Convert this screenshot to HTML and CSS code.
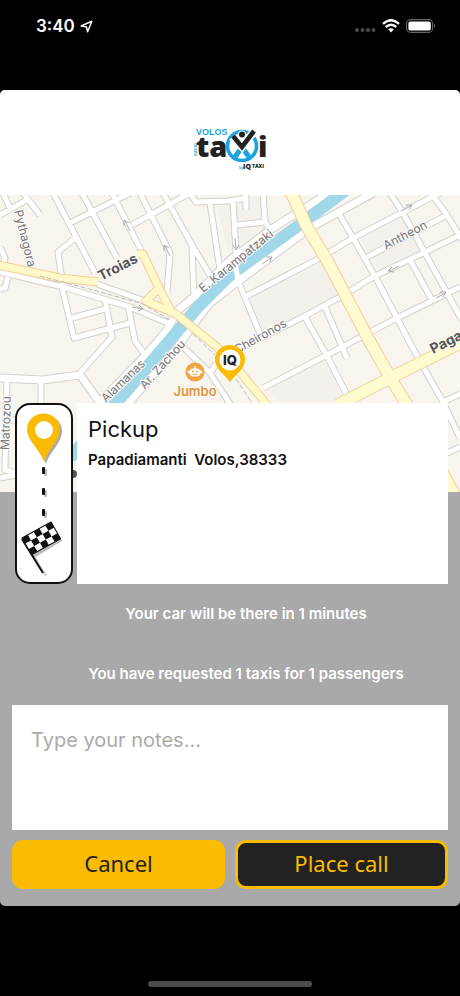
FILE: index.html
```html
<!DOCTYPE html>
<html lang="en">
<head>
    <meta charset="UTF-8">
    <meta name="viewport" content="width=device-width, initial-scale=1.0">
    <title>Volos Taxi</title>
    <link rel="stylesheet" href="styles.css">
</head>
<body>

<div class="status-bar">
    <div class="status-time">
        <span>3:40</span>
        <svg width="13" height="13" viewBox="0 0 13 13">
            <path d="M1.2 6 L11.8 1.2 L7.6 11.8 L6.4 6.8 Z" fill="none" stroke="#fff" stroke-width="1.5" stroke-linejoin="round"/>
        </svg>
    </div>
    <div class="status-icons">
        <svg width="22" height="16" viewBox="0 0 22 16" fill="#4a4a4a">
            <circle cx="3" cy="12" r="2"/>
            <circle cx="8.5" cy="12" r="2"/>
            <circle cx="14" cy="12" r="2"/>
            <circle cx="19.5" cy="12" r="2"/>
        </svg>
        <svg width="18" height="14" viewBox="0 0 18 14">
            <path d="M1 4.8 Q9 -2.4 17 4.8" fill="none" stroke="#fff" stroke-width="2.4"/>
            <path d="M3.8 8 Q9 3.4 14.2 8" fill="none" stroke="#fff" stroke-width="2.4"/>
            <path d="M6.2 10.3 Q9 8 11.8 10.3 L9 13.4 Z" fill="#fff"/>
        </svg>
        <svg width="30" height="14" viewBox="0 0 30 14">
            <rect x="0.6" y="0.6" width="26" height="12.8" rx="4" fill="none" stroke="#666" stroke-width="1.1"/>
            <rect x="2.4" y="2.4" width="22.4" height="9.2" rx="2.2" fill="#fff"/>
            <path d="M28 4.8 Q30.4 7 28 9.2 Z" fill="#666"/>
        </svg>
    </div>
</div>

<main class="app">
    <header class="app-header">
        <svg class="logo" width="76" height="50" viewBox="193 123 76 50">
            <text x="197" y="135" class="logo-blue" font-size="9">VOLOS</text>
            <text x="198" y="156" class="logo-blue" font-size="4" transform="rotate(-90 198 156)">RADIO</text>
            <text x="197" y="157" class="logo-black" font-size="29">ta</text>
            <text x="259" y="157" class="logo-black" font-size="29">i</text>
            <circle cx="243" cy="146" r="14.5" fill="none" stroke="#1ba4e0" stroke-width="3.6"/>
            <path d="M236 157 L243 147 L250 157" fill="none" stroke="#1ba4e0" stroke-width="5"/>
            <path d="M233 137 L243 147 L256 130" fill="none" stroke="#fff" stroke-width="8"/>
            <path d="M234 136 L243 147 L255 131" fill="none" stroke="#222" stroke-width="4.6"/>
            <circle cx="243" cy="134.5" r="4" fill="#fff"/>
            <circle cx="243" cy="134.5" r="3" fill="#222"/>
            <text x="240" y="169" class="logo-blue" font-size="4">by</text>
            <text x="244" y="169" class="logo-black" font-size="7">IQ</text>
            <text x="253" y="168" class="logo-black" font-size="5">TAXI</text>
        </svg>
    </header>

    <svg class="map" viewBox="0 195 460 297" preserveAspectRatio="xMidYMin slice">
        <defs>
            <path id="streets" d="
                M53 193 L95 273 M82 193 L117 258 M112 193 L142 252 M140 193 L170 253 L167 293
                M163 193 L193 247 L213 280 M192 247 L194 297 M70 223 L130 193 M132 225 L190 193
                M190 193 L196 202 L230 201 L246 198 M210 203 L220 270 M23 193 L40 215 M0 215 L30 198 M3 193 L10 208
                M75 238 L58 252 L63 287 M0 247 L5 258 L3 266 M0 272 L63 287 L130 307 L170 324 M97 284 L145 301
                M62 287 L74 338 L130 323 M72 318 L105 309 M105 299 L112 337 L80 373 M128 305 L135 341 L146 356
                M8 277 L5 288 L0 289
                M233 201 L236 252 L239 283 L260 334 M246 193 L246 210 M263 193 L265 222 L270 230 M236 225 L265 222
                M243 298 L320 258 L353 238 L403 212 L440 193 M367 257 L447 215
                M235 351 L303 317 L340 297 L373 277 L423 253 L460 235
                M263 388 L327 355 L397 318 L460 287
                M338 212 L353 238 L377 280 L397 318 L411 345 L443 402 L460 438
                M390 193 L403 213 L425 253 L447 293 L462 320 M431 193 L447 215 L462 240 M410 260 L432 300
                M305 317 L327 356 L350 401 M325 307 L347 358
                M443 402 L460 394 M445 454 L460 447
                M41 380 L41 410 M7 380 L5 470 L15 473 M0 478 L20 474 M7 420 L15 420
                M182 346 L210 373 L232 407 M210 373 L216 364"/>
            <path id="avenues" d="
                M329 193 L273 228 L230 260 L194 297 L177 311 L167 330 L147 354 L102 400
                M373 193 L310 228 L236 283 L209 304 L190 329 L178 347 L127 405
                M0 378 L43 380 L80 375 L107 412"/>
            <path id="mainRoads" d="
                M-2 265 L60 278 L98 282 M138 254 L143 254 L157 284 L172 313 M159 288 L146 301 L176 314 L217 347 L240 372 L268 406"/>
            <path id="wideRoads" d="M290 190 L307 227 L328 262 L370 342 L390 377 L407 405 L448 483 L456 498 M338 405 L390 378 L462 342"/>
        </defs>

        <rect y="195" width="460" height="297" fill="#f8f5ef"/>
        <path d="M245 300 L322 262 L345 297 L262 333 Z M265 387 L323 358 L346 402 L280 402 Z M357 233 L402 214 L420 250 L380 272 Z M215 200 L230 258 L268 230 L262 197 Z" fill="#f4f1ec"/>

        <use href="#streets" class="street-edge"/>
        <use href="#avenues" class="avenue-edge"/>
        <use href="#streets" class="street"/>
        <use href="#avenues" class="avenue"/>
        <path class="river" d="M354 184 L302 223 L230 275 L198 307 L170 340 L116 403 L70 458"/>
        <path d="M235 262 L239 286" class="street"/>
        <use href="#mainRoads" class="main-edge"/>
        <use href="#wideRoads" class="wide-edge"/>
        <use href="#mainRoads" class="main-road"/>
        <use href="#wideRoads" class="wide-road"/>

        <!-- railway and one-way arrows -->
        <path d="M40 276 L97 291 L143 304 L170 320 M193 334 L215 355 M236 379 L252 403" class="railway"/>
        <g class="arrows">
            <path d="M130 231 L125 221 M124 226 L124 220 L129 223"/>
            <path d="M170 256 L165 246 M164 251 L164 245 L169 248"/>
            <path d="M132 307 L142 309 M139 305 L143 309 L138 311"/>
            <path d="M235 238 L236 249 M233 245 L236 250 L239 245"/>
            <path d="M262 264 L271 258 M266 257 L272 257 L270 262"/>
            <path d="M401 211 L411 206 M406 205 L412 205 L409 210"/>
            <path d="M399 266 L389 271 M392 267 L388 271 L394 272"/>
            <path d="M436 298 L445 293 M440 292 L446 292 L443 297"/>
        </g>

        <g class="map-labels">
            <text x="14" y="211" transform="rotate(76 14 211)">Pythagora</text>
            <text x="203" y="293" transform="rotate(-39 203 293)">E. Karampatzaki</text>
            <text x="386" y="250" transform="rotate(-28 386 250)">Antheon</text>
            <text x="237" y="354" transform="rotate(-29 237 354)">Cheironos</text>
            <text x="106" y="403" transform="rotate(-44 106 403)">Alamanas</text>
            <text x="145" y="390" transform="rotate(-48 145 390)">Ar. Zachou</text>
            <text x="9" y="450" transform="rotate(-88 9 450)">Matrozou</text>
            <text x="101" y="281" class="label-bold" transform="rotate(-27 101 281)">Troias</text>
            <text x="433" y="354" class="label-bold" transform="rotate(-27 433 354)">Pagas</text>
        </g>

        <circle cx="73" cy="474" r="4" fill="#555"/>

        <!-- toy shop -->
        <circle cx="195" cy="372" r="9.5" fill="#f0a33e"/>
        <rect x="189.5" y="368.5" width="11" height="8" rx="4" fill="#fff"/>
        <circle cx="189" cy="372" r="1.4" fill="#fff"/>
        <circle cx="201" cy="372" r="1.4" fill="#fff"/>
        <path d="M195 369 V366" stroke="#fff" stroke-width="1.5"/>
        <circle cx="193" cy="371.5" r="1" fill="#f0a33e"/>
        <circle cx="197" cy="371.5" r="1" fill="#f0a33e"/>
        <path d="M192.5 374 Q195 376 197.5 374" fill="none" stroke="#f0a33e"/>
        <text x="195" y="396" class="label-shop">Jumbo</text>

        <!-- pickup pin -->
        <path d="M230 382 C225 375 215 369 215 359.5 A15 14.5 0 0 1 245 359.5 C245 369 235 375 230 382 Z" fill="#fabb00"/>
        <circle cx="230" cy="360" r="10.5" fill="#fff"/>
        <text x="230" y="365" class="label-pin">IQ</text>
    </svg>

    <section class="panel">
        <div class="route">
            <svg class="route-icon" width="58" height="181" viewBox="0 0 58 181">
                <rect x="1" y="1" width="56" height="179" rx="14" fill="#fff" stroke="#111" stroke-width="2"/>
                <path d="M31 61 C27 48 14 40 14 28 A16.5 15.5 0 0 1 47 28 C47 40 35 48 31 61 Z" fill="#aaa"/>
                <path d="M29 59 C25 46 12 38 12 26 A16.5 15.5 0 0 1 45 26 C45 38 33 46 29 59 Z" fill="#fabb00"/>
                <circle cx="29" cy="27" r="9" fill="#fff"/>
                <g fill="#bbb">
                    <rect x="29" y="66" width="3" height="7" rx="1"/>
                    <rect x="29" y="87" width="3" height="7" rx="1"/>
                    <rect x="29" y="108" width="3" height="7" rx="1"/>
                </g>
                <g fill="#111">
                    <rect x="27" y="64" width="3" height="7" rx="1"/>
                    <rect x="27" y="85" width="3" height="7" rx="1"/>
                    <rect x="27" y="106" width="3" height="7" rx="1"/>
                </g>
                <path d="M11 140 L31 173" stroke="#ccc" stroke-width="2"/>
                <path d="M10 139 L37 122 L47 138 L19 155 Z" fill="#bbb"/>
                <path d="M7 136 L28 170" stroke="#111" stroke-width="2"/>
                <g transform="matrix(5.8 -3.2 3.2 5.6 7 135)">
                    <rect width="5" height="3" fill="#fff" stroke="#111" stroke-width="0.16"/>
                    <path d="M0 0h1v1h-1z M2 0h1v1h-1z M4 0h1v1h-1z M1 1h1v1h-1z M3 1h1v1h-1z M0 2h1v1h-1z M2 2h1v1h-1z M4 2h1v1h-1z" fill="#111"/>
                </g>
            </svg>
            <div class="route-card">
                <h1>Pickup</h1>
                <p>Papadiamanti&nbsp; Volos,38333</p>
            </div>
        </div>

        <p class="message">Your car will be there in 1 minutes</p>
        <p class="message">You have requested 1 taxis for 1 passengers</p>

        <textarea class="notes" aria-label="Notes" placeholder="Type your notes..."></textarea>

        <div class="actions">
            <button type="button" class="btn btn-cancel">Cancel</button>
            <button type="button" class="btn btn-call">Place call</button>
        </div>
    </section>
</main>

<div class="home-indicator"></div>

</body>
</html>
```
FILE: styles.css
```css
* {
    box-sizing: border-box;
}

body {
    margin: 0;
    min-height: 100vh;
    display: flex;
    flex-direction: column;
    background-color: #000;
    font-family: Inter, "Liberation Sans", sans-serif;
}

h1, p {
    margin: 0;
}

/* Status bar */
.status-bar {
    display: flex;
    justify-content: space-between;
    align-items: flex-start;
    height: 90px;
    padding: 16px 24px 0 36px;
    color: #fff;
}

.status-time {
    display: flex;
    align-items: center;
    gap: 5px;
    font-size: 17px;
    font-weight: 600;
    line-height: 20px;
}

.status-icons {
    display: flex;
    align-items: center;
    gap: 6px;
    height: 20px;
}

/* App */
.app {
    border-radius: 5px;
    overflow: hidden;
    background-color: #a9a9a9;
}

.app-header {
    display: flex;
    justify-content: center;
    padding: 33px 0 22px;
    background-color: #fff;
}

.logo {
    font-family: "Open Sans", sans-serif;
    font-weight: 800;
}

.logo-blue {
    fill: #1ba4e0;
    font-family: "Liberation Sans", sans-serif;
    font-weight: 700;
}

.logo-black {
    fill: #222;
}

/* Map */
.map {
    display: block;
    width: 100%;
    height: 297px;
}

.map path,
.map use {
    stroke-linejoin: round;
}

.river {
    fill: none;
    stroke: #a0d8ea;
    stroke-width: 12;
}

.street, .street-edge, .avenue, .avenue-edge,
.main-road, .main-edge, .wide-road, .wide-edge {
    fill: none;
}

.street {
    stroke: #fff;
    stroke-width: 5;
}

.street-edge {
    stroke: #d3d0cb;
    stroke-width: 7;
}

.avenue {
    stroke: #fff;
    stroke-width: 7;
}

.avenue-edge {
    stroke: #d3d0cb;
    stroke-width: 9;
}

.main-road {
    stroke: #fff8c8;
    stroke-width: 7;
}

.main-edge {
    stroke: #f5cf98;
    stroke-width: 9;
}

.wide-road {
    stroke: #fdfbcf;
    stroke-width: 11;
}

.wide-edge {
    stroke: #f5cf98;
    stroke-width: 13;
}

.railway {
    fill: none;
    stroke: #bbb;
    stroke-width: 1;
    stroke-dasharray: 5 2;
}

.arrows {
    fill: none;
    stroke: #aaa;
    stroke-width: 1;
}

.map-labels {
    font-size: 12px;
    fill: #77777a;
    stroke: #fbfaf7;
    stroke-width: 2px;
    paint-order: stroke;
}

.label-bold {
    font-size: 14px;
    font-weight: 700;
    fill: #555;
}

.label-shop {
    font-size: 13px;
    font-weight: 600;
    fill: #dc943c;
    stroke: #fbfaf7;
    stroke-width: 2px;
    paint-order: stroke;
    text-anchor: middle;
}

.label-pin {
    font-size: 13px;
    font-weight: 800;
    fill: #222;
    text-anchor: middle;
}

/* Booking panel, its first row lies over the map */
.panel {
    position: relative;
    margin-top: -89px;
    padding: 0 12px 17px;
}

.route {
    display: flex;
    gap: 4px;
    padding-left: 3px;
}

.route-icon {
    flex: none;
}

.route-card {
    flex: 1;
    padding: 12px 11px;
    background-color: #fff;
    color: #111;
}

.route-card h1 {
    font-size: 22px;
    font-weight: 400;
    line-height: 28px;
}

.route-card p {
    margin-top: 7px;
    font-size: 15px;
    font-weight: 600;
    line-height: 20px;
}

.message {
    padding-left: 32px;
    color: #fff;
    font-size: 15px;
    font-weight: 600;
    line-height: 60px;
    text-align: center;
}

.notes {
    display: block;
    width: 100%;
    height: 125px;
    margin-top: 1px;
    padding: 21px 19px;
    border: none;
    border-radius: 0;
    background-color: #fff;
    color: #111;
    font-family: inherit;
    font-size: 20px;
    line-height: 28px;
    resize: none;
}

.notes::placeholder {
    color: #aaa;
    opacity: 1;
}

.actions {
    display: flex;
    gap: 10px;
    margin-top: 10px;
}

.btn {
    flex: 1;
    height: 49px;
    padding: 0 0 4px;
    border: 3px solid #fabb00;
    border-radius: 11px;
    font-family: "Noto Sans", sans-serif;
    font-size: 22px;
    line-height: 28px;
    cursor: pointer;
}

.btn-cancel {
    background-color: #fabb00;
    color: #222;
}

.btn-call {
    background-color: #222;
    color: #fabb00;
}

.home-indicator {
    width: 164px;
    height: 6px;
    margin: auto auto 9px;
    border-radius: 3px;
    background-color: #4c4c4c;
}
```
